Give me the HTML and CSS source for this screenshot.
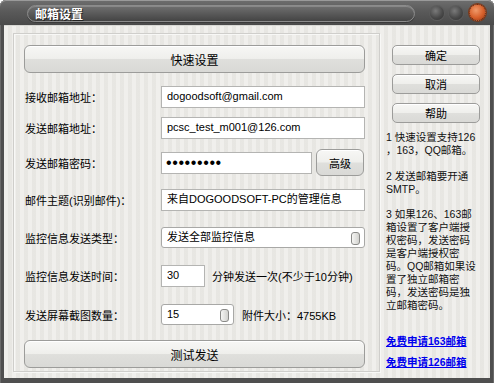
FILE: index.html
```html
<!DOCTYPE html>
<html lang="zh-CN">
<head>
  <meta charset="UTF-8" />
  <title>邮箱设置</title>
  <link rel="stylesheet" href="styles.css">
</head>
<body>
  <div class="window">
    <div class="titlebar">
      <div class="title-pill">
        <span class="title-text">邮箱设置</span>
      </div>
      <div class="title-buttons">
        <span class="dot"></span>
        <span class="dot"></span>
        <span class="dot close"></span>
      </div>
    </div>

    <div class="content">
      <div class="panel">
        <button class="btn wide quick">快速设置</button>

        <div class="row r1">
          <label class="label">接收邮箱地址：</label>
          <div class="input full">dogoodsoft@gmail.com</div>
        </div>
        <div class="row r2">
          <label class="label">发送邮箱地址：</label>
          <div class="input full">pcsc_test_m001@126.com</div>
        </div>
        <div class="row r3">
          <label class="label">发送邮箱密码：</label>
          <div class="input pwd">•••••••••</div>
          <button class="btn adv">高级</button>
        </div>
        <div class="row r4">
          <label class="label">邮件主题(识别邮件)：</label>
          <div class="input full">来自DOGOODSOFT-PC的管理信息</div>
        </div>
        <div class="row r5">
          <label class="label">监控信息发送类型：</label>
          <div class="input full select">发送全部监控信息<span class="thumb"></span></div>
        </div>
        <div class="row r6">
          <label class="label">监控信息发送时间：</label>
          <div class="input small">30</div>
          <span class="note">分钟发送一次(不少于10分钟)</span>
        </div>
        <div class="row r7">
          <label class="label">发送屏幕截图数量：</label>
          <div class="input spin select">15<span class="thumb"></span></div>
          <span class="note size">附件大小：4755KB</span>
        </div>

        <button class="btn wide test">测试发送</button>
      </div>

      <div class="side">
        <button class="btn side-btn first">确定</button>
        <button class="btn side-btn">取消</button>
        <button class="btn side-btn">帮助</button>

        <div class="help">1 快速设置支持126<br>，163，QQ邮箱。<br><br>2 发送邮箱要开通<br>SMTP。<br><br>3 如果126、163邮<br>箱设置了客户端授<br>权密码，发送密码<br>是客户端授权密<br>码。QQ邮箱如果设<br>置了独立邮箱密<br>码，发送密码是独<br>立邮箱密码。</div>

        <a class="link first-link" href="#">免费申请163邮箱</a>
        <a class="link" href="#">免费申请126邮箱</a>
      </div>
    </div>
  </div>
</body>
</html>
```

FILE: styles.css
```css
body {
  margin: 0;
  background: #fff;
  font-family: "Liberation Sans", "Noto Sans CJK SC", sans-serif;
  font-size: 11px;
  color: #000;
  overflow: hidden;
}

.window {
  width: 494px;
  height: 383px;
  background: #4f4f4f;
  border-radius: 6px 6px 0 0;
  box-sizing: border-box;
  padding: 0 4px 5px 4px;
  display: flex;
  flex-direction: column;
  box-shadow: inset 0 1px 0 #8a8a8a, inset 1px 0 0 #6a6a6a, inset -1px 0 0 #6a6a6a;
}

/* 标题栏 */
.titlebar {
  height: 25px;
  display: flex;
  align-items: center;
  background: linear-gradient(#6e6e6e 0%, #5a5a5a 45%, #4a4a4a 100%);
  margin: 0 -4px;
  padding: 0 4px 0 27px;
  border-radius: 6px 6px 0 0;
  box-shadow: inset 0 1px 0 #9a9a9a;
}

.title-pill {
  width: 388px;
  height: 17px;
  margin-top: 1px;
  border-radius: 9px;
  background: linear-gradient(#707070 0%, #5a5a5a 50%, #444 100%);
  border: 1px solid #8c8c8c;
  box-shadow: inset 0 1px 0 #888, 0 1px 0 #3a3a3a;
  box-sizing: border-box;
  display: flex;
  align-items: center;
  padding-left: 7px;
}

.title-text {
  color: #fff;
  font-weight: bold;
  font-size: 12px;
  text-shadow: 1px 1px 0 #222;
}

.title-buttons {
  display: flex;
  align-items: center;
  margin-left: 15px;
  gap: 5px;
}

.dot {
  width: 14px;
  height: 14px;
  border-radius: 50%;
  background: radial-gradient(circle at 40% 35%, #7a7a7a 0%, #4a4a4a 55%, #2e2e2e 100%);
  box-shadow: 0 0 0 1px #5c5c5c;
}

.dot.close {
  width: 17px;
  height: 17px;
  margin-left: 1px;
  background: radial-gradient(circle at 40% 35%, #f09a6a 0%, #d8612c 55%, #9c3c16 100%);
  box-shadow: 0 0 0 1px #7a3a1c;
  border: 1px dotted #6a2a10;
  box-sizing: border-box;
}

/* 主体 */
.content {
  flex: 1;
  display: flex;
  background: #ebeae6 repeating-linear-gradient(90deg, rgba(255,255,255,0.25) 0 4px, rgba(0,0,0,0.015) 4px 8px);
  padding: 8px 0 0 9px;
  box-shadow: inset 0 1px 0 #d8d8d4;
}

.panel {
  width: 367px;
  height: 339px;
  box-sizing: border-box;
  border: 1px solid #cfcecb;
  box-shadow: inset 1px 1px 0 #f8f8f6, 1px 1px 0 #f8f8f6;
  padding: 0 14px 0 10px;
  display: flex;
  flex-direction: column;
}

.btn {
  font-family: inherit;
  font-size: 11px;
  color: #000;
  border: 1px solid #9c9c9a;
  border-radius: 5px;
  background: linear-gradient(#f7f7f5 0%, #efefec 48%, #dfdfdc 52%, #d9d9d6 100%);
  box-shadow: inset 0 1px 0 #fff;
  padding: 0;
  cursor: pointer;
}

.wide {
  width: 341px;
  height: 28px;
  border-radius: 6px;
  font-size: 12px;
}

.quick {
  margin-top: 11px;
}

.test {
  margin-top: 15px;
}

.row {
  display: flex;
  align-items: center;
  height: 22px;
}

.r1 { margin-top: 13px; }
.r2 { margin-top: 9px; }
.r3 { margin-top: 10px; height: 27px; }
.r4 { margin-top: 13px; }
.r5 { margin-top: 16px; height: 21px; }
.r6 { margin-top: 17px; }
.r7 { margin-top: 17px; height: 21px; }

.label {
  width: 136px;
  padding-left: 1px;
  flex-shrink: 0;
}

.input {
  height: 22px;
  box-sizing: border-box;
  background: #fff;
  border: 1px solid #b4b4b2;
  padding-left: 5px;
  line-height: 19px;
  white-space: nowrap;
  overflow: hidden;
}

.full { width: 204px; }

.pwd {
  width: 151px;
  font-size: 16px;
  letter-spacing: 0.6px;
  padding-left: 4px;
}

.adv {
  width: 48px;
  height: 27px;
  margin-left: 4px;
  border-radius: 6px;
}

.select {
  height: 21px;
  border-radius: 3px;
  border-color: #a8a8a6;
  position: relative;
  line-height: 18px;
}

.thumb {
  position: absolute;
  right: 4px;
  top: 4px;
  width: 7px;
  height: 11px;
  border: 1px solid #8a8a88;
  border-radius: 3px;
  background: linear-gradient(90deg, #f6f6f4, #d2d2cf);
}

.small { width: 44px; }

.spin { width: 73px; }

.note {
  margin-left: 7px;
  white-space: nowrap;
}

.size { margin-left: 8px; }

/* 右侧 */
.side {
  width: 98px;
  margin-left: 6px;
  display: flex;
  flex-direction: column;
}

.side-btn {
  width: 88px;
  height: 20px;
  margin-left: 6px;
  margin-top: 9px;
  border-radius: 5px;
}

.side-btn.first { margin-top: 12px; }

.help {
  margin-top: 8px;
  font-size: 10.5px;
  line-height: 12.9px;
  white-space: nowrap;
  color: #111;
}

.link {
  color: #0000ee;
  font-weight: bold;
  font-size: 10.5px;
  text-decoration: underline;
  line-height: 13px;
  margin-top: 8px;
  white-space: nowrap;
}

.first-link { margin-top: 23px; }
```
